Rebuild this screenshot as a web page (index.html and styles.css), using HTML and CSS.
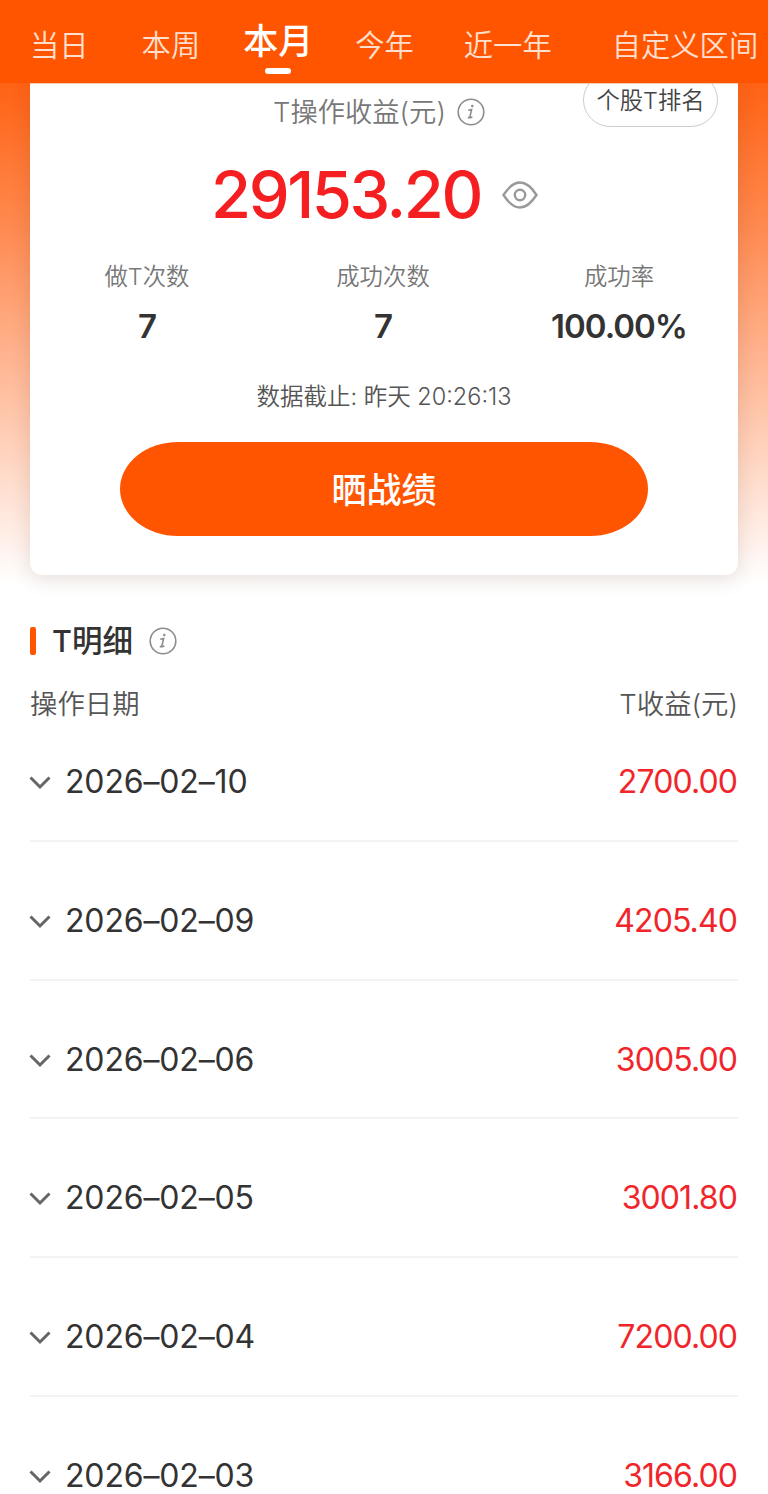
FILE: index.html
```html
<!DOCTYPE html>
<html lang="zh-CN">
<head>
    <meta charset="UTF-8">
    <meta name="viewport" content="width=device-width, initial-scale=1.0">
    <title>T操作收益</title>
    <link rel="stylesheet" href="styles.css">
</head>
<body>
    <nav class="tabs">
        <a href="#" class="tab tab-day">当日</a>
        <a href="#" class="tab tab-week">本周</a>
        <a href="#" class="tab tab-month active">本月</a>
        <a href="#" class="tab tab-year">今年</a>
        <a href="#" class="tab tab-last">近一年</a>
        <a href="#" class="tab tab-custom">自定义区间</a>
    </nav>
    <div class="hero">
        <div class="card">
            <a href="#" class="rank">个股T排名</a>
            <div class="card-title">
                <span>T操作收益(元)</span>
                <svg class="info" viewBox="0 0 28 28">
                    <circle cx="14" cy="14" r="12.8"/>
                    <path d="M11.2 12.2l3.4-.6-1.7 7.2q-.2 1.2 2.5.2M10.8 19.6h3"/>
                    <circle class="dot" cx="15.3" cy="8" r="1.3"/>
                </svg>
            </div>
            <div class="total">
                <span class="total-num">29153.20</span>
                <svg class="eye" viewBox="0 0 36 28">
                    <path d="M1.5 14C7 5.5 12 1.5 18 1.5S29 5.5 34.5 14C29 22.5 24 26.5 18 26.5S7 22.5 1.5 14z"/>
                    <circle cx="18" cy="14" r="5.2"/>
                </svg>
            </div>
            <div class="stats">
                <div class="stat"><span class="label">做T次数</span><span class="value">7</span></div>
                <div class="stat"><span class="label">成功次数</span><span class="value">7</span></div>
                <div class="stat"><span class="label">成功率</span><span class="value">100.00%</span></div>
            </div>
            <div class="deadline">数据截止: 昨天 20:26:13</div>
            <button class="share">晒战绩</button>
        </div>
    </div>
    <div class="detail">
        <h2 class="detail-title">
            <span class="bar"></span>
            <span>T明细</span>
            <svg class="info" viewBox="0 0 28 28">
                <circle cx="14" cy="14" r="12.8"/>
                <path d="M11.2 12.2l3.4-.6-1.7 7.2q-.2 1.2 2.5.2M10.8 19.6h3"/>
                <circle class="dot" cx="15.3" cy="8" r="1.3"/>
            </svg>
        </h2>
        <div class="list-head">
            <span>操作日期</span>
            <span>T收益(元)</span>
        </div>
        <div class="row">
            <svg class="arrow" viewBox="0 0 22 14"><path d="M1.5 1.5L11 11L20.5 1.5"/></svg>
            <span class="date">2026–02–10</span>
            <span class="profit">2700.00</span>
        </div>
        <div class="row">
            <svg class="arrow" viewBox="0 0 22 14"><path d="M1.5 1.5L11 11L20.5 1.5"/></svg>
            <span class="date">2026–02–09</span>
            <span class="profit">4205.40</span>
        </div>
        <div class="row">
            <svg class="arrow" viewBox="0 0 22 14"><path d="M1.5 1.5L11 11L20.5 1.5"/></svg>
            <span class="date">2026–02–06</span>
            <span class="profit">3005.00</span>
        </div>
        <div class="row">
            <svg class="arrow" viewBox="0 0 22 14"><path d="M1.5 1.5L11 11L20.5 1.5"/></svg>
            <span class="date">2026–02–05</span>
            <span class="profit">3001.80</span>
        </div>
        <div class="row">
            <svg class="arrow" viewBox="0 0 22 14"><path d="M1.5 1.5L11 11L20.5 1.5"/></svg>
            <span class="date">2026–02–04</span>
            <span class="profit">7200.00</span>
        </div>
        <div class="row">
            <svg class="arrow" viewBox="0 0 22 14"><path d="M1.5 1.5L11 11L20.5 1.5"/></svg>
            <span class="date">2026–02–03</span>
            <span class="profit">3166.00</span>
        </div>
    </div>
</body>
</html>
```

FILE: styles.css
```css
* {
    box-sizing: border-box;
}
body {
    margin: 0;
    height: 1494px;
    overflow: hidden;
    background-color: #fff;
    font-family: Inter, "Noto Sans CJK SC", sans-serif;
    color: #333;
}
.tabs {
    display: flex;
    height: 83px;
    padding-left: 30px;
    background-color: #ff5500;
}
.tab {
    flex: none;
    padding-top: 25px;
    font-size: 29.3px;
    line-height: 42px;
    font-weight: 350;
    color: #ffe0d0;
    text-decoration: none;
    white-space: nowrap;
}
.tab-week {
    margin-left: 53px;
}
.tab-month {
    margin-left: 43px;
}
.tab-year {
    margin-left: 42px;
}
.tab-last {
    margin-left: 50px;
}
.tab-custom {
    margin-left: 60px;
}
.tab.active {
    display: flex;
    flex-direction: column;
    align-items: center;
    padding-top: 20px;
    font-size: 35px;
    font-weight: 500;
    color: #fff;
}
.tab.active::after {
    content: "";
    width: 26px;
    height: 6px;
    margin-top: 6px;
    border-radius: 3px;
    background-color: #fff;
}
.hero {
    height: 517px;
    padding: 0 30px;
    overflow: hidden;
    background: linear-gradient(#ff6214, #ff8a50 28%, #ffc8ae 65%, #fff 97%);
}
.card {
    position: relative;
    display: flex;
    flex-direction: column;
    align-items: center;
    height: 492px;
    border-top: 1px solid #f3c9b4;
    border-radius: 0 0 12px 12px;
    background-color: #fff;
    box-shadow: 0 4px 20px rgba(80, 40, 20, 0.14);
}
.rank {
    position: absolute;
    top: -11px;
    right: 20px;
    width: 135px;
    height: 54px;
    border: 1.5px solid #ccc;
    border-radius: 27px;
    font-size: 23.3px;
    line-height: 53px;
    font-weight: 350;
    text-align: center;
    color: #444;
    text-decoration: none;
    white-space: nowrap;
}
.card-title {
    display: flex;
    align-items: center;
    gap: 11px;
    margin: 8px 10px 0 0;
    height: 40px;
    font-size: 27.3px;
    line-height: 38px;
    font-weight: 350;
    color: #777;
}
.card-title span {
    margin-top: 1px;
}
.info {
    width: 28px;
    height: 28px;
    fill: none;
    stroke: #8c8c8c;
    stroke-width: 1.6;
}
.info .dot {
    fill: #8c8c8c;
    stroke: none;
}
.total {
    display: flex;
    align-items: center;
    gap: 21px;
    height: 80px;
    margin: 22px 19px 0 0;
}
.total-num {
    font-size: 65px;
    font-weight: 500;
    letter-spacing: -2.4px;
    color: #f51f22;
}
.eye {
    width: 36px;
    height: 28px;
    margin-top: 1px;
    fill: none;
    stroke: #999;
    stroke-width: 2.4;
}
.stats {
    display: grid;
    grid-template-columns: 1fr 1fr 1fr;
    width: 100%;
    margin-top: 25px;
}
.stat {
    display: flex;
    flex-direction: column;
    align-items: center;
    margin-left: -2px;
}
.label {
    font-size: 23.4px;
    line-height: 36px;
    font-weight: 350;
    color: #777;
}
.value {
    margin-top: 11px;
    font-size: 33px;
    line-height: 40px;
    font-weight: 600;
    letter-spacing: -1px;
}
.deadline {
    margin-top: 33px;
    font-size: 23.5px;
    line-height: 36px;
    font-weight: 350;
    color: #555;
}
.share {
    width: 528px;
    height: 94px;
    margin-top: 27px;
    padding-bottom: 4px;
    border: none;
    border-radius: 58px / 47px;
    background-color: #ff5500;
    color: #fff;
    font-family: inherit;
    font-size: 35px;
    font-weight: 500;
}
.detail {
    padding: 0 30px;
}
.detail-title {
    display: flex;
    align-items: center;
    height: 40px;
    margin: 21px 0 0;
    font-size: 30.5px;
    line-height: 36px;
    font-weight: 500;
}
.bar {
    width: 6px;
    height: 28px;
    margin-right: 16px;
    border-radius: 2px;
    background-color: #ff5500;
}
.detail-title .info {
    margin-left: 16px;
}
.list-head {
    display: flex;
    justify-content: space-between;
    margin-top: 23px;
    font-size: 27.4px;
    line-height: 40px;
    font-weight: 350;
    color: #555;
}
.row {
    display: flex;
    align-items: center;
    height: 138.7px;
    padding-top: 20px;
    border-bottom: 2px solid #f3f3f3;
    font-size: 32px;
}
.list-head + .row {
    height: 118px;
    padding: 0 0 2px;
}
.arrow {
    width: 22px;
    height: 14px;
    margin: 3px 14px 0 -1px;
    fill: none;
    stroke: #666;
    stroke-width: 3;
}
.date {
    letter-spacing: -0.15px;
}
.profit {
    margin-left: auto;
    padding-right: 1px;
    letter-spacing: -0.9px;
    color: #f0262a;
}
```
